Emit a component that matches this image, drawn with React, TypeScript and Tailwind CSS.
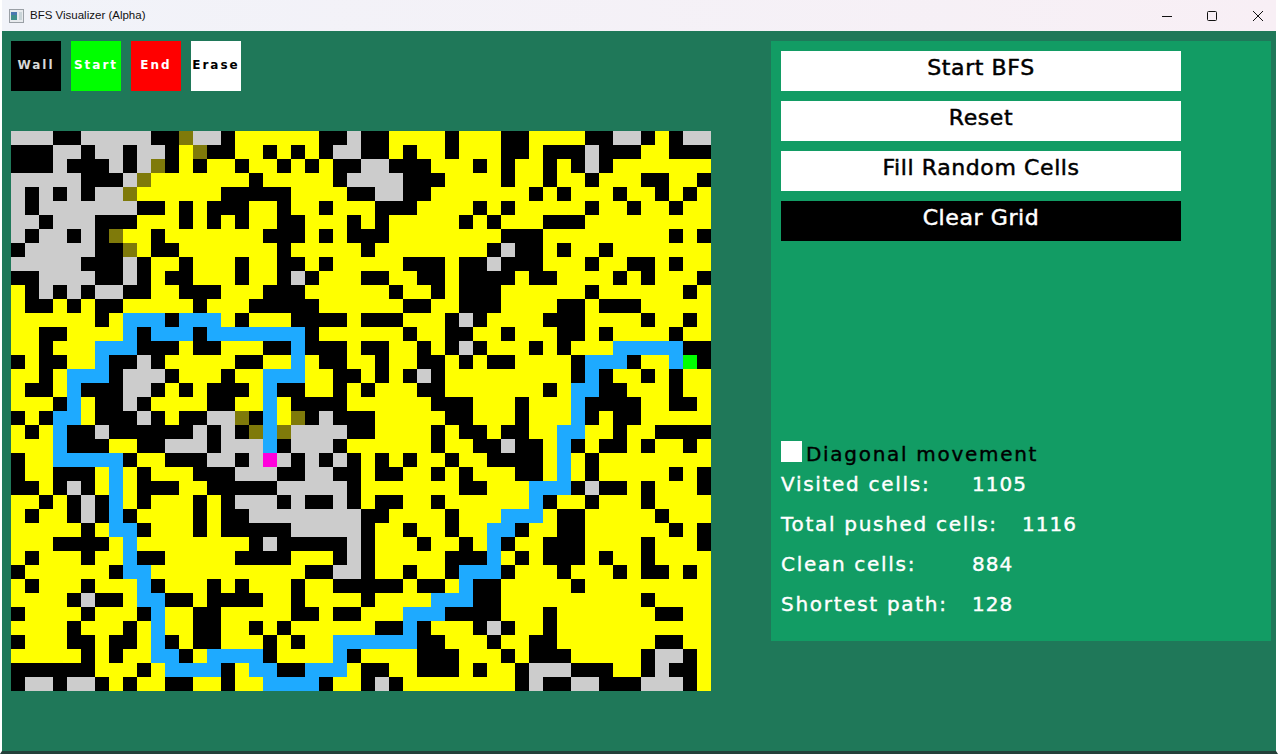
const GRID = [
  'ggg##ggggg##ogg#......##g##....#...##....##gg#.#gg',
  '###gg#gg#gg#.o##..#.#.#gg##.#..#...##.###g###..###',
  '###g###g#go#.#..#..#.#.##gg###...#.#..#.#g#.......',
  'ggggg###go.......#.....#gggg###....#..#..#...##..#',
  'g#g#g#ggo......#####....##gg##.......#.#...#..#.#.',
  'g#ggggggg##.#.###..#..#...###....#.#.....#..#..#..',
  'gg#ggg###...#.#.#..##...#.#.....#.#...###.........',
  'g#gg#g#o..#.......###.#.###........###.........#.#',
  '#ggggg##o.##.......#.....#........#g##.#..#.......',
  'ggggg###g#..#...#..##.#.....###.##g###...#..##.#..',
  '##gggg##g#.##...#..#g#...##..##.####.##....#.#...#',
  '.#g#g#gg##..###...###......#..#.###......#......#.',
  '.##.#.##.....#...#####......##..###....##.###.....',
  '......#.bbb#bbb.#...####.###...#g#....###....#..#.',
  '..##....b#bbb#bbbbbbb#......#..##..#...##.#....#..',
  '..#...bbb###.##...##b###.##..#.#g#...#.#...bbbbb##',
  '#.##..b##g#.....##..b.##..#..##.#.##....#bbb#..bs#',
  '..#.bbb#ggg#...#..bbb..##.#.#g#.........#b#..#.#..',
  '.##.b###gg#.#.###.b##..#.#...##.......#.bb##...#..',
  '...#b.##g#....##..b.####......###...#...b####..##.',
  '#.#bb.###g#.##ggo#b.o#g###.....##...#...b#.##.....',
  '.#.b##g######g#g#obogggg##....#.##.##..bb..#..####',
  '...b###..##ggg#gggb#ggg#......#..##g##.b#.##.#..#.',
  '#..bbbbb#..###gg#gmg#g#g#.#.#..#..####.b.#........',
  '#..###.b.#...###ggg##gg##.##..#.#...##.b.#.....#.#',
  '##.#g#.b.###..#####ggggg#.......##...bbb#g##.#...#',
  '..#.#g#b.#...#.#ggg#g##g#.##..#......b#..#...#....',
  '.#..#g#b#....#.##gggggggg##....#...bbb.##.....#...',
  '.....#.bb#...#.#####ggggg#..#..#..bb#..##......#.#',
  '...####.b........#g#####g#...#..#.b#..###....#...#',
  '.#...#..b##.....####...#g#.....###b.#.###.#..#....',
  '#......#bb...........##gg#..#..#bbb#...#...#.##.#.',
  '.#...#...b#...#.#...#..#####.##.b##.....#.........',
  '....#g##.bb##.####..#....#....bbb##..........#....',
  '#....#...#b..##.....##.##...bbb####...#.......##..',
  '....#...#.b..##..#.#......##b#...#g#..#...........',
  '#...##.##.b#.##...#.#..bbbbbb##...#..##.......##..',
  '.....#.#..bb#.bbbb#....b#....###...#.###.....#gg#.',
  '######...#.bbbb#.bb##bbb.##..###.#..#ggg###..#g##.',
  '#gg#gg#.#..##..#..bbbb#..#g#........#g##gg###ggg#.',
];

const CELL_COLORS: Record<string, string> = {
  '#': 'bg-black',
  '.': 'bg-[#ffff00]',
  g: 'bg-[#cccccc]',
  o: 'bg-[#7f7a0a]',
  b: 'bg-[#1eaaff]',
  s: 'bg-[#00ff00]',
  m: 'bg-[#ff00dc]',
};

const uiFont = { fontFamily: '"DejaVu Sans", sans-serif' };

function Tool({ label, className }: { label: string; className: string }) {
  return (
    <div
      className={`flex h-[50px] w-[50px] items-center justify-center pb-0.5 text-[12px] font-bold tracking-[2px] ${className}`}
    >
      {label}
    </div>
  );
}

function ActionButton({ label, dark }: { label: string; dark?: boolean }) {
  return (
    <button
      className={`flex h-10 w-[400px] items-center justify-center pb-2 text-[22px] tracking-[0.6px] [-webkit-text-stroke:0.5px_currentColor] ${
        dark ? 'bg-black text-white' : 'bg-white text-black'
      }`}
    >
      {label}
    </button>
  );
}

function Stat({ label, value, labelClass }: { label: string; value: string; labelClass: string }) {
  return (
    <div className="flex h-10 items-center text-[20px] text-white [-webkit-text-stroke:0.4px_currentColor]">
      <span className={`whitespace-nowrap tracking-[1.7px] ${labelClass}`}>{label}</span>
      <span className="whitespace-nowrap tracking-[1px]">{value}</span>
    </div>
  );
}

export default function App() {
  return (
    <div
      className="flex h-[754px] w-[1278px] flex-col overflow-hidden border-x-2 border-b-[3px] border-x-white border-b-[#24403a] bg-white"
      style={uiFont}
    >
      {/* Title bar */}
      <div className="flex h-[31px] items-center bg-gradient-to-r from-[#f1f3f9] to-[#f8eff5]">
        <svg width="15" height="14" viewBox="0 0 15 14" className="ml-[7px]">
          <rect x="0.5" y="0.5" width="14" height="13" fill="#e8ebee" stroke="#9aa0a6" />
          <rect x="2" y="3" width="6" height="8" fill="#3f8f8a" />
          <rect x="2" y="3" width="6" height="3" fill="#4a78b0" />
          <rect x="10" y="3" width="3" height="8" fill="#c9d4d8" />
        </svg>
        <span
          className="ml-[6px] text-[11.5px] text-[#111111]"
          style={{ fontFamily: '"Liberation Sans", sans-serif' }}
        >
          BFS Visualizer (Alpha)
        </span>
        <div className="ml-auto flex items-center pr-[13px]">
          <svg width="10" height="10" viewBox="0 0 10 10" stroke="#111111" fill="none">
            <path d="M0 5.5H10" />
          </svg>
          <svg width="10" height="10" viewBox="0 0 10 10" stroke="#111111" fill="none" className="ml-[35px]">
            <rect x="0.5" y="0.5" width="9" height="9" rx="1" />
          </svg>
          <svg width="10" height="10" viewBox="0 0 10 10" stroke="#111111" fill="none" className="ml-9">
            <path d="M0 0L10 10M10 0L0 10" />
          </svg>
        </div>
      </div>

      {/* Window content */}
      <div className="flex flex-1 gap-[60px] bg-[#1f7859] pl-[9px] pt-[10px]">
        <div className="flex flex-col gap-10">
          <div className="flex gap-[10px]">
            <Tool label="Wall" className="bg-black text-[#d8d8d8]" />
            <Tool label="Start" className="bg-[#00ff00] text-white" />
            <Tool label="End" className="bg-[#ff0000] text-white" />
            <Tool label="Erase" className="bg-white text-black" />
          </div>
          <div className="grid w-[700px] grid-cols-[repeat(50,14px)] grid-rows-[repeat(40,14px)]">
            {GRID.flatMap((row, y) =>
              row.split('').map((cell, x) => <div key={`${x}-${y}`} className={CELL_COLORS[cell]} />),
            )}
          </div>
        </div>

        {/* Side panel */}
        <div className="flex h-[600px] w-[500px] flex-col justify-between bg-[#129c64] pb-[17px] pl-[10px] pt-[10px]">
          <div className="flex flex-col gap-[10px]">
            <ActionButton label="Start BFS" />
            <ActionButton label="Reset" />
            <ActionButton label="Fill Random Cells" />
            <ActionButton label="Clear Grid" dark />
          </div>
          <div className="flex flex-col">
            <div className="mb-0.5 flex h-[21px] items-center gap-1">
              <div className="h-[21px] w-[21px] bg-white" />
              <span className="pt-1 text-[20px] leading-none tracking-[1.7px] text-black [-webkit-text-stroke:0.4px_currentColor]">
                Diagonal movement
              </span>
            </div>
            <Stat label="Visited cells:" value="1105" labelClass="w-[191px]" />
            <Stat label="Total pushed cells:" value="1116" labelClass="w-[241px]" />
            <Stat label="Clean cells:" value="884" labelClass="w-[191px]" />
            <Stat label="Shortest path:" value="128" labelClass="w-[191px]" />
          </div>
        </div>
      </div>
    </div>
  );
}
